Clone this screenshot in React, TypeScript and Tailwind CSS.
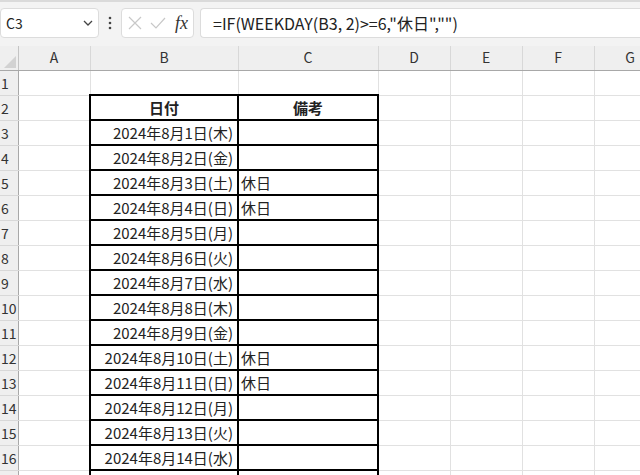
import { Fragment } from 'react'

const days = ['木', '金', '土', '日', '月', '火', '水']
const cols = ['A', 'B', 'C', 'D', 'E', 'F', 'G']
const widths = [18, 72, 148, 140, 72, 72, 72, 72]

const font = { fontFamily: '"Noto Sans CJK JP", sans-serif' }

function Toolbar() {
  return (
    <div className="h-[46px] bg-[#f3f3f3] border-t-2 border-[#dadada] flex items-start pt-[6px] gap-0">
      <div className="w-[99px] h-[30px] bg-white border border-[#dcdcdc] rounded-[4px] flex items-center justify-between pl-[5px] pr-[5px] text-[14px] text-[#222]">
        <span>C3</span>
        <svg width="10" height="7" viewBox="0 0 10 7"><path d="M1 1 L5 5 L9 1" fill="none" stroke="#444" strokeWidth="1.3" /></svg>
      </div>
      <div className="w-[22px] h-[30px] flex items-center justify-center">
        <svg width="4" height="14" viewBox="0 0 4 14"><circle cx="2" cy="2" r="1.3" fill="#444" /><circle cx="2" cy="7" r="1.3" fill="#444" /><circle cx="2" cy="12" r="1.3" fill="#444" /></svg>
      </div>
      <div className="w-[73px] h-[30px] bg-white border border-[#dcdcdc] rounded-[4px] flex items-center pl-[6px] gap-[8px]">
        <svg width="14" height="14" viewBox="0 0 14 14"><path d="M1 1 L13 13 M13 1 L1 13" stroke="#c8c8c8" strokeWidth="1.2" /></svg>
        <svg width="16" height="12" viewBox="0 0 16 12"><path d="M1 6 L6 11 L15 1" fill="none" stroke="#c8c8c8" strokeWidth="1.2" /></svg>
        <span className="text-[18px] italic text-[#333] leading-none ml-[1px]" style={{ fontFamily: '"Liberation Serif", serif' }}>fx</span>
      </div>
      <div className="ml-[6px] flex-1 h-[30px] bg-white border border-[#dcdcdc] rounded-l-[4px] border-r-0 flex items-center pl-[12px] text-[16px] text-[#222] whitespace-nowrap">
        =IF(WEEKDAY(B3, 2)&gt;=6,"休日","")
      </div>
    </div>
  )
}

export default function App() {
  const rows = Array.from({ length: 17 }, (_, i) => i + 1)
  return (
    <div className="w-[640px] h-[475px] overflow-hidden bg-white" style={font}>
      <Toolbar />
      <table className="table-fixed border-collapse w-[666px] text-[14px] text-[#222]">
        <colgroup>
          {widths.map((w, i) => <col key={i} style={{ width: w }} />)}
        </colgroup>
        <thead>
          <tr className="h-[24px] bg-[#efefef]">
            <th className="border-r border-b border-[#c4c4c4] border-b-[#a8a8a8] p-0 relative">
              <svg className="absolute right-[2px] bottom-[2px]" width="12" height="12" viewBox="0 0 12 12"><path d="M12 0 L12 12 L0 12 Z" fill="#d2d2d2" /></svg>
            </th>
            {cols.map(c => (
              <th key={c} className="font-normal text-[#333] border-r border-[#d8d8d8] border-b border-b-[#a8a8a8] p-0">{c}</th>
            ))}
            <th className="border-b border-b-[#a8a8a8]" />
          </tr>
        </thead>
        <tbody>
          {rows.map(r => {
            const inTable = r >= 2
            const last = r === 17
            const d = r - 2
            return (
              <tr key={r} className="h-[25px]">
                <td className="bg-[#efefef] border-r border-r-[#a8a8a8] border-b border-b-[#d8d8d8] pl-[1px] text-[#333] leading-none">{last ? '' : r}</td>
                <td className="border border-[#e1e1e1]" />
                {inTable ? (
                  <Fragment>
                    <td className={`border-2 border-black px-[4px] leading-none whitespace-nowrap text-[15px] ${r === 2 ? 'text-center font-bold' : 'text-right'}`}>
                      {last ? '' : r === 2 ? '日付' : `2024年8月${d}日(${days[(d - 1) % 7]})`}
                    </td>
                    <td className={`border-2 border-black px-[2px] leading-none whitespace-nowrap text-[15px] ${r === 2 ? 'text-center font-bold' : ''}`}>
                      {r === 2 ? '備考' : ((d - 1) % 7 === 2 || (d - 1) % 7 === 3) ? '休日' : ''}
                    </td>
                  </Fragment>
                ) : (
                  <Fragment>
                    <td className="border border-[#e1e1e1]" />
                    <td className="border border-[#e1e1e1]" />
                  </Fragment>
                )}
                <td className="border border-[#e1e1e1]" />
                <td className="border border-[#e1e1e1]" />
                <td className="border border-[#e1e1e1]" />
                <td className="border border-[#e1e1e1]" />
              </tr>
            )
          })}
        </tbody>
      </table>
    </div>
  )
}
